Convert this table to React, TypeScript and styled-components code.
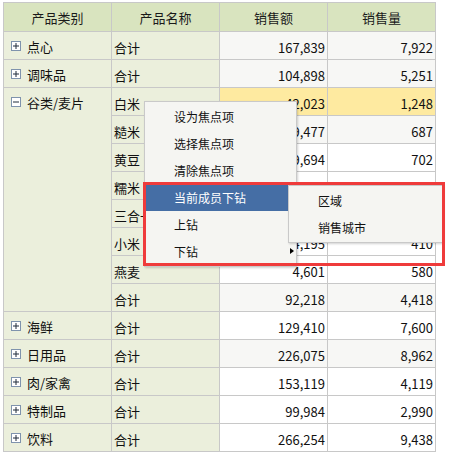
import React from "react";
import styled, { createGlobalStyle } from "styled-components";

const Global = createGlobalStyle`
  html, body { margin: 0; padding: 0; background: #ffffff; }
  body { font-family: "Noto Sans CJK SC", "Noto Sans", sans-serif; }
`;

const Page = styled.div`
  position: relative;
  width: 457px;
  height: 454px;
  box-sizing: border-box;
  padding: 2px 0 0 3px;
  overflow: hidden;
`;

const Table = styled.table`
  border-collapse: collapse;
  table-layout: fixed;
  width: 433px;
  font-size: 13px;
  color: #111;
`;

const HeadCell = styled.th`
  height: 28px;
  padding: 0;
  border: 1px solid #c8c8c8;
  background: #d9e4bf;
  font-weight: normal;
  text-align: center;
  color: #1a1a1a;
`;

const CatCell = styled.td`
  padding: 0;
  border: 1px solid #c8c8c8;
  background: #ebefdc;
  vertical-align: top;
`;

const CatInner = styled.div`
  display: flex;
  align-items: center;
  gap: 6px;
  padding: 6px 0 0 7px;
  height: 16px;
`;

const NameCell = styled.td`
  height: 28px;
  padding: 4px 0 0 2px;
  box-sizing: border-box;
  border: 1px solid #c8c8c8;
  background: #ebefdc;
  vertical-align: middle;
`;

const NumCell = styled.td<{ $tone: "white" | "grey" | "yellow" }>`
  height: 28px;
  padding: 4px 2px 0 0;
  box-sizing: border-box;
  border: 1px solid #c8c8c8;
  text-align: right;
  vertical-align: middle;
  background: ${(p) =>
    p.$tone === "yellow" ? "#feeaa0" : p.$tone === "grey" ? "#f7f7f5" : "#ffffff"};
`;

const Menu = styled.div`
  position: absolute;
  left: 144px;
  top: 101px;
  width: 153px;
  box-sizing: border-box;
  background: #f5f5f2;
  border: 1px solid #c9c9c9;
  padding: 1px;
  box-shadow: 1px 1px 2px rgba(0, 0, 0, 0.18);
  font-size: 12px;
  color: #111;
`;

const MenuItem = styled.div<{ $active?: boolean }>`
  position: relative;
  height: 27px;
  display: flex;
  align-items: center;
  padding-left: 28px;
  background: ${(p) => (p.$active ? "#456ea5" : "transparent")};
  color: ${(p) => (p.$active ? "#ffffff" : "#111")};
`;

const Arrow = styled.span`
  position: absolute;
  right: 1px;
  top: 10px;
  width: 0;
  height: 0;
  border-left: 4px solid #000;
  border-top: 3.5px solid transparent;
  border-bottom: 3.5px solid transparent;
`;

const SubMenu = styled.div`
  position: absolute;
  left: 288px;
  top: 185px;
  width: 155px;
  box-sizing: border-box;
  background: #f5f5f2;
  border: 1px solid #c9c9c9;
  padding: 1px 0;
  box-shadow: 1px 1px 2px rgba(0, 0, 0, 0.18);
  font-size: 12px;
`;

const SubItem = styled.div`
  height: 27px;
  display: flex;
  align-items: center;
  padding-left: 29px;
  color: #111;
`;

const Annotation = styled.div`
  position: absolute;
  left: 143px;
  top: 182px;
  width: 302px;
  height: 84px;
  box-sizing: border-box;
  border: 3px solid #ef3b3b;
  pointer-events: none;
`;

const Toggle = ({ open }: { open?: boolean }) => (
  <svg width="10" height="10" viewBox="0 0 10 10" style={{ flex: "none" }}>
    <rect x="0.5" y="0.5" width="9" height="9" fill="#ffffff" stroke="#7f93ad" />
    <line x1="2" y1="5" x2="8" y2="5" stroke="#1e2a3a" />
    {!open && <line x1="5" y1="2" x2="5" y2="8" stroke="#1e2a3a" />}
  </svg>
);

type Row = {
  name: string;
  sales: string;
  qty: string;
  tone: "white" | "grey" | "yellow";
};

type Group = { cat: string; open?: boolean; rows: Row[] };

const groups: Group[] = [
  { cat: "点心", rows: [{ name: "合计", sales: "167,839", qty: "7,922", tone: "grey" }] },
  { cat: "调味品", rows: [{ name: "合计", sales: "104,898", qty: "5,251", tone: "grey" }] },
  {
    cat: "谷类/麦片",
    open: true,
    rows: [
      { name: "白米", sales: "42,023", qty: "1,248", tone: "yellow" },
      { name: "糙米", sales: "9,477", qty: "687", tone: "grey" },
      { name: "黄豆", sales: "9,694", qty: "702", tone: "white" },
      { name: "糯米", sales: "8,930", qty: "396", tone: "white" },
      { name: "三合一", sales: "6,213", qty: "391", tone: "white" },
      { name: "小米", sales: "4,195", qty: "410", tone: "white" },
      { name: "燕麦", sales: "4,601", qty: "580", tone: "white" },
      { name: "合计", sales: "92,218", qty: "4,418", tone: "grey" },
    ],
  },
  { cat: "海鲜", rows: [{ name: "合计", sales: "129,410", qty: "7,600", tone: "white" }] },
  { cat: "日用品", rows: [{ name: "合计", sales: "226,075", qty: "8,962", tone: "grey" }] },
  { cat: "肉/家禽", rows: [{ name: "合计", sales: "153,119", qty: "4,119", tone: "white" }] },
  { cat: "特制品", rows: [{ name: "合计", sales: "99,984", qty: "2,990", tone: "white" }] },
  { cat: "饮料", rows: [{ name: "合计", sales: "266,254", qty: "9,438", tone: "white" }] },
];

export default function App() {
  return (
    <>
      <Global />
      <Page>
        <Table>
          <colgroup>
            <col style={{ width: 108 }} />
            <col style={{ width: 108 }} />
            <col style={{ width: 108 }} />
            <col style={{ width: 108 }} />
          </colgroup>
          <thead>
            <tr>
              <HeadCell>产品类别</HeadCell>
              <HeadCell>产品名称</HeadCell>
              <HeadCell>销售额</HeadCell>
              <HeadCell>销售量</HeadCell>
            </tr>
          </thead>
          <tbody>
            {groups.map((g) =>
              g.rows.map((r, i) => (
                <tr key={g.cat + i}>
                  {i === 0 && (
                    <CatCell rowSpan={g.rows.length}>
                      <CatInner>
                        <Toggle open={g.open} />
                        <span>{g.cat}</span>
                      </CatInner>
                    </CatCell>
                  )}
                  <NameCell>{r.name}</NameCell>
                  <NumCell $tone={r.tone}>{r.sales}</NumCell>
                  <NumCell $tone={r.tone}>{r.qty}</NumCell>
                </tr>
              ))
            )}
          </tbody>
        </Table>

        <Menu>
          <MenuItem>设为焦点项</MenuItem>
          <MenuItem>选择焦点项</MenuItem>
          <MenuItem>清除焦点项</MenuItem>
          <MenuItem $active>当前成员下钻</MenuItem>
          <MenuItem>上钻</MenuItem>
          <MenuItem>
            下钻
            <Arrow />
          </MenuItem>
        </Menu>

        <SubMenu>
          <SubItem>区域</SubItem>
          <SubItem>销售城市</SubItem>
        </SubMenu>

        <Annotation />
      </Page>
    </>
  );
}
